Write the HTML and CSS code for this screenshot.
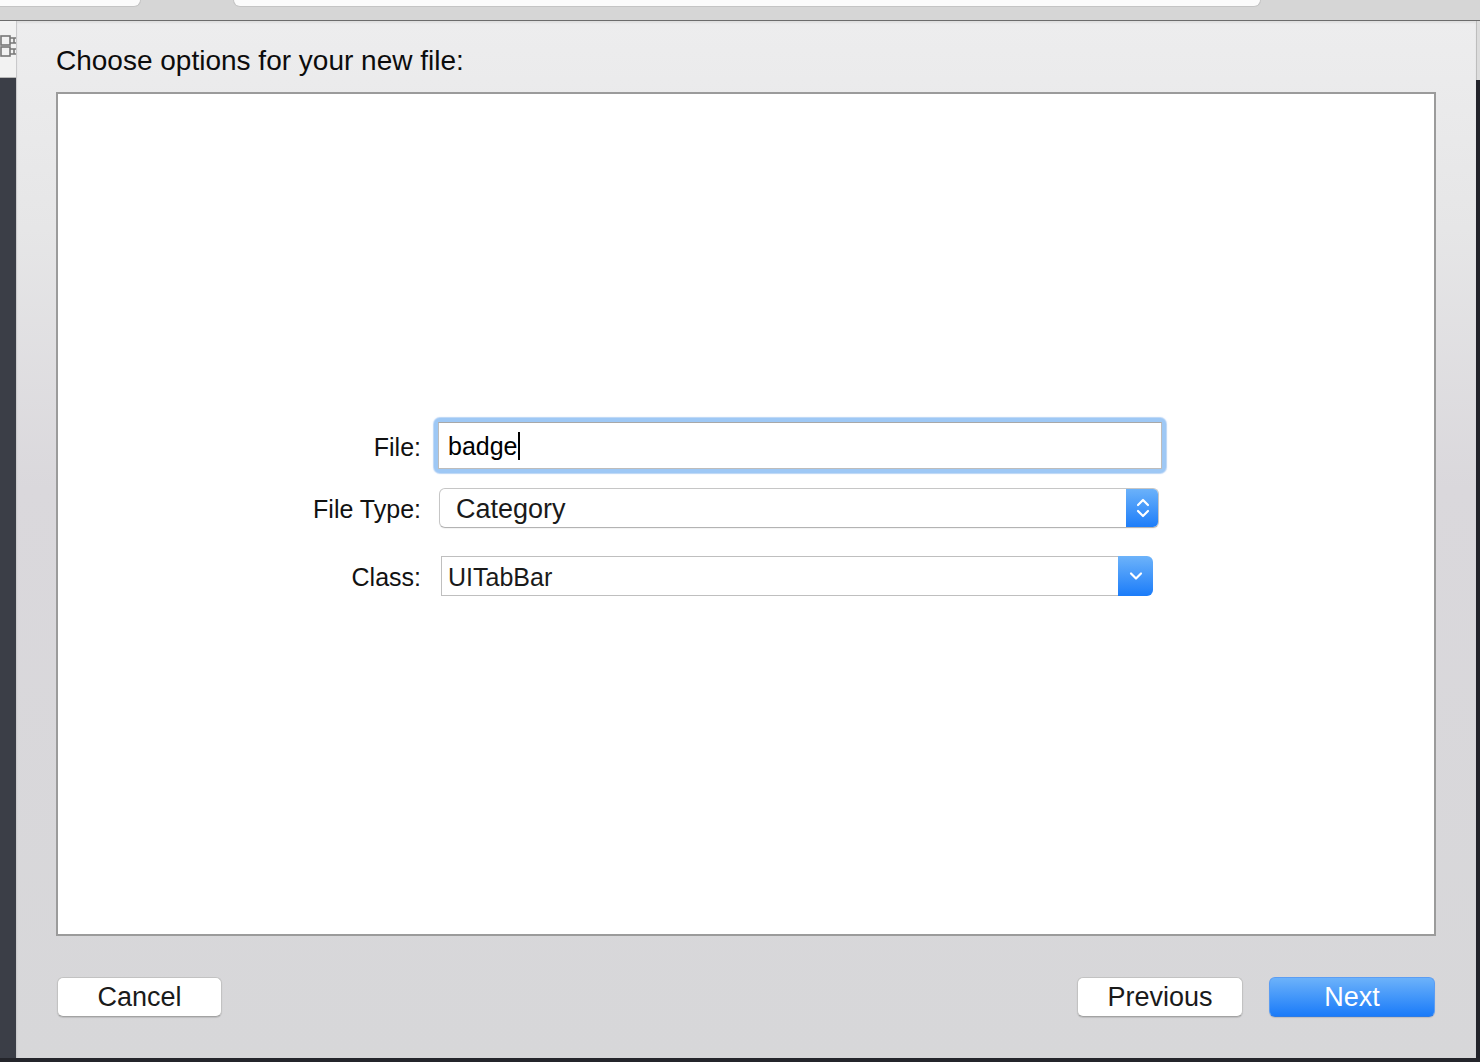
FILE: index.html
```html
<!DOCTYPE html>
<html>
<head>
<meta charset="utf-8">
<link rel="stylesheet" href="styles.css">
</head>
<body>
<div class="topbar">
  <div class="tab tab-left"></div>
  <div class="tab tab-mid"></div>
</div>
<div class="main">
  <div class="side-left">
    <div class="side-left-top">
      <svg width="16" height="30" viewBox="0 0 16 30">
        <rect x="1" y="4" width="9" height="9" fill="none" stroke="#777" stroke-width="1.6"/>
        <rect x="1" y="15" width="9" height="9" fill="none" stroke="#777" stroke-width="1.6"/>
        <path d="M10 6 H14 V11 H10 M10 17 H14 V22 H10 M14 6 H16 M14 11 H16 M14 17 H16 M14 22 H16" fill="none" stroke="#777" stroke-width="1.6"/>
      </svg>
    </div>
    <div class="side-left-bottom"></div>
  </div>
  <div class="sheet">
    <div class="title">Choose options for your new file:</div>
    <div class="box">
      <div class="form">
        <div class="row">
          <div class="label">File:</div>
          <div class="ring">
            <div class="input"><span class="typed">badge</span></div>
          </div>
        </div>
        <div class="row row-type">
          <div class="label">File Type:</div>
          <div class="popup">
            <div class="popup-text">Category</div>
            <div class="popup-btn">
              <svg width="20" height="30" viewBox="0 0 20 30">
                <path d="M5 12 L10 7 L15 12" fill="none" stroke="#fff" stroke-width="2.2" stroke-linecap="round" stroke-linejoin="round"/>
                <path d="M5 18 L10 23 L15 18" fill="none" stroke="#fff" stroke-width="2.2" stroke-linecap="round" stroke-linejoin="round"/>
              </svg>
            </div>
          </div>
        </div>
        <div class="row row-class">
          <div class="label">Class:</div>
          <div class="combo">
            <div class="combo-text">UITabBar</div>
            <div class="combo-btn">
              <svg width="20" height="20" viewBox="0 0 20 20">
                <path d="M5 7.5 L10 12.5 L15 7.5" fill="none" stroke="#fff" stroke-width="2.2" stroke-linecap="round" stroke-linejoin="round"/>
              </svg>
            </div>
          </div>
        </div>
      </div>
    </div>
    <div class="buttons">
      <div class="btn btn-cancel">Cancel</div>
      <div class="spacer"></div>
      <div class="btn">Previous</div>
      <div class="btn btn-next">Next</div>
    </div>
  </div>
  <div class="side-right">
    <div class="side-right-top"></div>
    <div class="side-right-bottom"></div>
  </div>
</div>
<div class="bottombar"></div>
</body>
</html>
```
FILE: styles.css
```css
html, body {
  margin: 0;
  padding: 0;
}
body {
  width: 1480px;
  height: 1062px;
  overflow: hidden;
  background: #26272d;
  font-family: "Liberation Sans", Arial, sans-serif;
  color: #111;
}
.topbar {
  height: 20px;
  background: #d6d6d6;
  border-bottom: 1px solid #6c6c6c;
  display: flex;
}
.tab {
  height: 6px;
  background: #fbfbfb;
  border-bottom: 1px solid #c4c4c4;
}
.tab-left {
  width: 140px;
  border-bottom-right-radius: 8px;
  border-right: 1px solid #c4c4c4;
}
.tab-mid {
  margin-left: 92px;
  width: 1026px;
  border-bottom-left-radius: 8px;
  border-bottom-right-radius: 8px;
  border-left: 1px solid #c4c4c4;
  border-right: 1px solid #c4c4c4;
}
.main {
  display: flex;
  height: 1037px;
}
.side-left {
  width: 16px;
  display: flex;
  flex-direction: column;
}
.side-left-top {
  height: 57px;
  background: #f2f2f2;
  border-bottom: 1px solid #b8b8b8;
  overflow: hidden;
  display: flex;
  align-items: flex-start;
  padding-top: 11px;
  box-sizing: border-box;
}
.side-left-bottom {
  flex: 1;
  background: #3b3e47;
}
.side-right {
  width: 4px;
  display: flex;
  flex-direction: column;
}
.side-right-top {
  height: 59px;
  background: #dcdcdc;
  border-left: 1px solid #bdbdbd;
}
.side-right-bottom {
  flex: 1;
  background: #22232a;
}
.sheet {
  width: 1460px;
  box-sizing: border-box;
  padding: 0 40px;
  background: linear-gradient(#ededee 0%, #e6e6e7 20%, #dad8dc 45%, #d7d7d9 100%);
  border-left: 1px solid #c9c9cb;
  display: flex;
  flex-direction: column;
  box-shadow: inset 0 2px 2px rgba(0,0,0,0.06);
}
.sheet .title {
  font-size: 28px;
  line-height: 32px;
  padding-top: 24px;
  margin-bottom: 15px;
  margin-left: -1px;
  color: #0c0c0c;
}
.box {
  margin-left: -1px;
  width: 1380px;
  height: 844px;
  box-sizing: border-box;
  background: #fff;
  border: 2px solid #9b9b9b;
}
.form {
  padding-top: 324px;
  display: flex;
  flex-direction: column;
}
.row {
  display: flex;
  align-items: center;
}
.label {
  width: 363px;
  text-align: right;
  font-size: 25px;
  padding-top: 3px;
  color: #111;
}
.ring {
  margin-left: 13px;
  width: 732px;
  height: 55px;
  box-sizing: border-box;
  border: 4px solid #9ec8f5;
  border-radius: 6px;
  background: #fff;
  box-shadow: 0 0 1px 1px rgba(140,185,240,0.6);
}
.input {
  height: 100%;
  box-sizing: border-box;
  border: 1px solid #bcbcbc;
  border-top-color: #a8a8a8;
  padding-left: 9px;
  padding-top: 3px;
  font-size: 25px;
  line-height: 41px;
  color: #000;
}
.typed {
  border-right: 2px solid #000;
}
.row-type {
  margin-top: 15px;
}
.popup {
  margin-left: 18px;
  width: 720px;
  height: 40px;
  box-sizing: border-box;
  border: 1px solid #c6c6c6;
  border-bottom-color: #b3b3b3;
  border-radius: 6px;
  background: #fff;
  display: flex;
  overflow: hidden;
  box-shadow: 0 1px 1px rgba(0,0,0,0.05);
}
.popup-text {
  flex: 1;
  padding-left: 16px;
  padding-top: 2px;
  font-size: 27px;
  line-height: 36px;
  color: #1a1a1a;
}
.popup-btn {
  width: 33px;
  margin: -1px -1px -1px 0;
  background: linear-gradient(#6db3fa, #1b7cf9);
  display: flex;
  align-items: center;
  justify-content: center;
}
.row-class {
  margin-top: 28px;
}
.combo {
  margin-left: 20px;
  width: 712px;
  height: 40px;
  display: flex;
}
.combo-text {
  flex: 1;
  box-sizing: border-box;
  border: 1px solid #bfbfbf;
  border-right: none;
  padding-left: 6px;
  padding-top: 3px;
  font-size: 25px;
  line-height: 35px;
  color: #1a1a1a;
}
.combo-btn {
  width: 35px;
  border-top-right-radius: 6px;
  border-bottom-right-radius: 6px;
  background: linear-gradient(#6db3fa, #1b7cf9);
  display: flex;
  align-items: center;
  justify-content: center;
}
.buttons {
  display: flex;
  margin-top: 41px;
  height: 40px;
}
.spacer {
  flex: 1;
}
.btn {
  width: 166px;
  height: 40px;
  box-sizing: border-box;
  background: #fff;
  border: 1px solid #c2c2c2;
  border-bottom-color: #a3a3a3;
  border-radius: 6px;
  box-shadow: 0 1px 1px rgba(0,0,0,0.12);
  font-size: 27px;
  line-height: 39px;
  text-align: center;
  color: #1a1a1a;
}
.btn-cancel {
  width: 165px;
}
.btn-next {
  margin-left: 26px;
  margin-right: 1px;
  background: linear-gradient(#6cb2fa, #1a7bf9);
  border-color: #5b9df3;
  border-bottom-color: #2c7be6;
  color: #fff;
}
.bottombar {
  height: 4px;
  background: #24252b;
}
```
